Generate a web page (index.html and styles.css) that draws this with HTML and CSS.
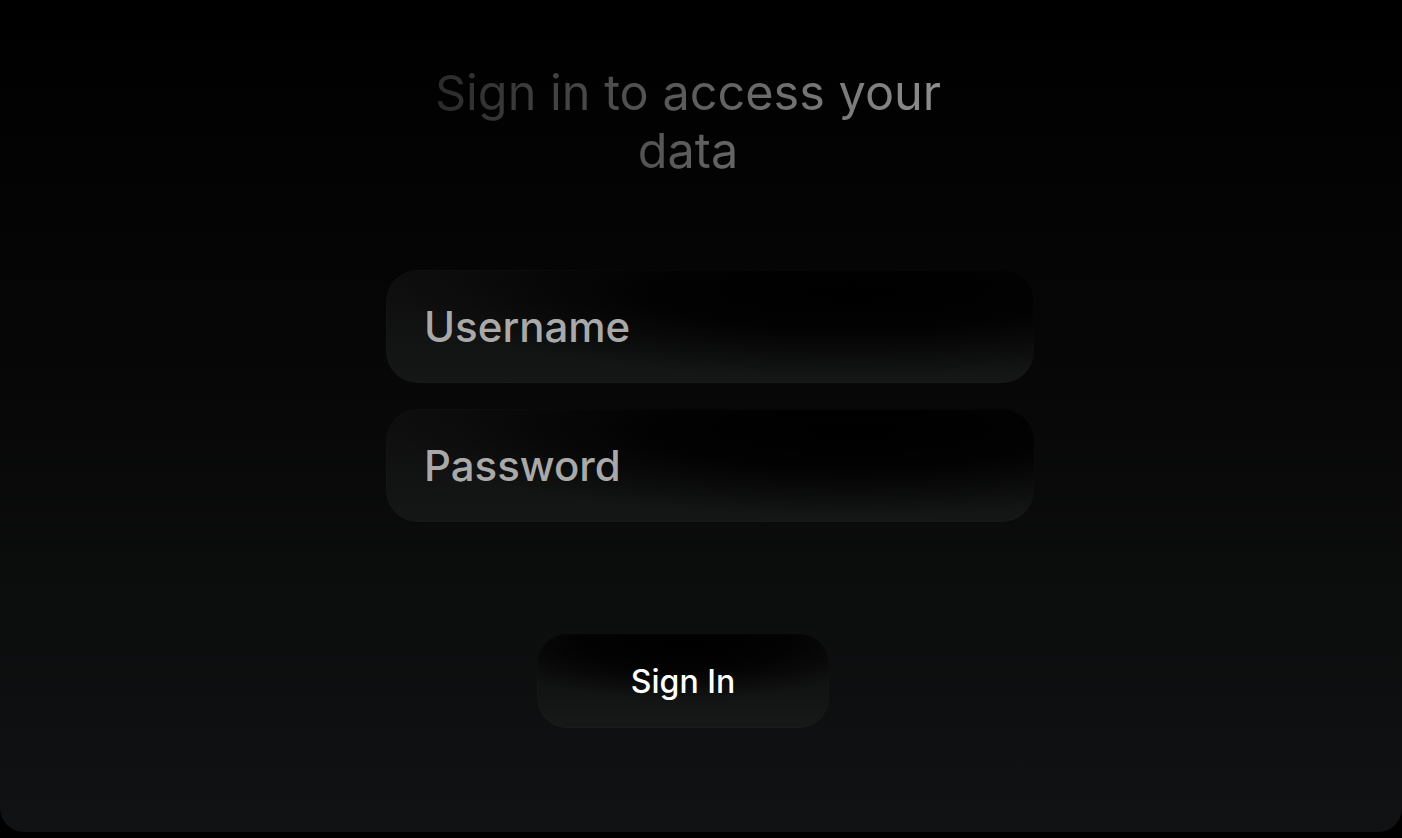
FILE: index.html
```html
<!DOCTYPE html>
<html>
<head>
<meta charset="utf-8">
<link rel="stylesheet" href="styles.css">
</head>
<body>
<div class="card">
  <h1 class="title">Sign in to access your data</h1>
  <div class="fields">
    <div class="field">Username</div>
    <div class="field">Password</div>
  </div>
  <button class="btn">Sign In</button>
</div>
</body>
</html>
```
FILE: styles.css
```css
html, body {
  margin: 0;
  padding: 0;
  background: #000;
  height: 838px;
  overflow: hidden;
}
.card {
  width: 1402px;
  height: 832px;
  border-radius: 24px;
  background: linear-gradient(to bottom, #000 0%, #060606 40%, #111213 100%);
  display: flex;
  flex-direction: column;
  align-items: flex-start;
  box-sizing: border-box;
  padding-top: 64px;
  font-family: Inter, "Noto Sans", sans-serif;
}
.title {
  margin: 0 0 0 418px;
  width: 540px;
  font-size: 48.6px;
  line-height: 58px;
  font-weight: 400;
  text-align: center;
  background: linear-gradient(to right, #2a2a2a 3%, #8e8e8e 97%);
  -webkit-background-clip: text;
  background-clip: text;
  color: transparent;
}
.fields {
  margin: 90px 0 0 386px;
  display: flex;
  flex-direction: column;
  gap: 26px;
}
.field {
  width: 648px;
  height: 113px;
  border-radius: 32px;
  box-sizing: border-box;
  padding-left: 38px;
  display: flex;
  align-items: center;
  font-size: 42px;
  font-weight: 500;
  color: #a9a9a9;
  background:
    radial-gradient(ellipse 70% 75% at 72% 20%, rgba(0,0,0,1) 0%, rgba(0,0,0,0.85) 45%, rgba(0,0,0,0) 100%),
    linear-gradient(to top, #151616 0%, #0d0d0d 100%);
  box-shadow: inset 0 0 0 1px rgba(255,255,255,0.015);
}
.btn {
  margin: 112px 0 0 537px;
  width: 292px;
  height: 94px;
  border: none;
  border-radius: 30px;
  font-family: Inter, "Noto Sans", sans-serif;
  font-size: 32px;
  font-weight: 500;
  color: #fff;
  background:
    radial-gradient(ellipse 70% 60% at 50% 10%, rgba(0,0,0,1) 0%, rgba(0,0,0,0.8) 50%, rgba(0,0,0,0) 100%),
    linear-gradient(to top, #171818 0%, #0b0b0b 100%);
  box-shadow: inset 0 0 0 1px rgba(255,255,255,0.015);
  padding: 0;
}
```
